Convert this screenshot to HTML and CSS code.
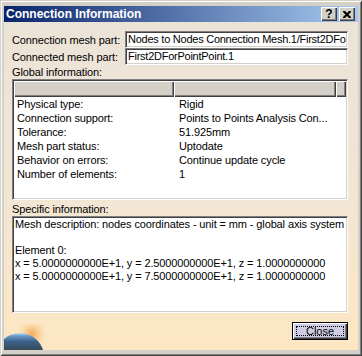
FILE: index.html
```html
<!DOCTYPE html>
<html lang="en">
<head>
    <meta charset="UTF-8">
    <title>Connection Information</title>
    <link rel="stylesheet" href="styles.css">
</head>
<body>

<div class="window">
    <div class="titlebar">
        <span class="title">Connection Information</span>
        <div class="title-btns">
            <button class="tbtn help-btn">?</button>
            <button class="tbtn">
                <svg width="8" height="7" viewBox="0 0 8 7">
                    <path d="M0 0h2l2 2 2-2h2v1l-2.5 2.5L8 6v1H6L4 5 2 7H0V6l2.5-2.5L0 1z" fill="#000"/>
                </svg>
            </button>
        </div>
    </div>

    <div class="client">
        <!-- globe decoration at the bottom left -->
        <svg class="globe" width="56" height="26" viewBox="0 0 56 26">
            <defs>
                <radialGradient id="glow" cx="0.5" cy="0.5" r="0.5">
                    <stop offset="0" stop-color="#f6a24a" stop-opacity="0.9"/>
                    <stop offset="0.5" stop-color="#f8c078" stop-opacity="0.5"/>
                    <stop offset="1" stop-color="#fde7c2" stop-opacity="0"/>
                </radialGradient>
                <linearGradient id="sphere" x1="0" y1="0" x2="0" y2="1">
                    <stop offset="0" stop-color="#b8dcf4"/>
                    <stop offset="0.06" stop-color="#6a9cc8"/>
                    <stop offset="0.18" stop-color="#3a6088"/>
                    <stop offset="0.38" stop-color="#3a4652"/>
                </linearGradient>
            </defs>
            <circle cx="28" cy="10" r="16" fill="url(#glow)"/>
            <circle cx="16" cy="33" r="24" fill="url(#sphere)"/>
        </svg>

        <div class="field-row">
            <span class="field-label">Connection mesh part:</span>
            <div class="textbox">Nodes to Nodes Connection Mesh.1/First2DFo</div>
        </div>
        <div class="field-row">
            <span class="field-label">Connected mesh part:</span>
            <div class="textbox">First2DForPointPoint.1</div>
        </div>

        <div class="section-label">Global information:</div>
        <div class="listview">
            <div class="lv-header">
                <div class="lv-head c1"></div>
                <div class="lv-head c2"></div>
                <div class="lv-head c3"></div>
            </div>
            <div class="lv-row"><span class="c1">Physical type:</span><span class="c2">Rigid</span></div>
            <div class="lv-row"><span class="c1">Connection support:</span><span class="c2">Points to Points Analysis Con...</span></div>
            <div class="lv-row"><span class="c1">Tolerance:</span><span class="c2">51.925mm</span></div>
            <div class="lv-row"><span class="c1">Mesh part status:</span><span class="c2">Uptodate</span></div>
            <div class="lv-row"><span class="c1">Behavior on errors:</span><span class="c2">Continue update cycle</span></div>
            <div class="lv-row"><span class="c1">Number of elements:</span><span class="c2">1</span></div>
        </div>

        <div class="section-label">Specific information:</div>
        <div class="textarea">
            <div class="ta-line">Mesh description: nodes coordinates - unit = mm - global axis system</div>
            <div class="ta-line"></div>
            <div class="ta-line">Element 0:</div>
            <div class="ta-line">x = 5.0000000000E+1, y = 2.5000000000E+1, z = 1.0000000000</div>
            <div class="ta-line">x = 5.0000000000E+1, y = 7.5000000000E+1, z = 1.0000000000</div>
        </div>

        <div class="footer">
            <button class="close-btn"><span class="focus-rect">Close</span></button>
        </div>
    </div>
</div>

</body>
</html>
```

FILE: styles.css
```css
* {
    box-sizing: border-box;
}

body {
    margin: 0;
    font-family: 'Liberation Sans', Arial, sans-serif;
    font-size: 11px;
    letter-spacing: -0.12px;
    color: #000000;
    background-color: #d4d0c8;
    overflow: hidden;
}

/* Window frame */
.window {
    width: 362px;
    height: 356px;
    padding: 6px 4px 6px 4px;
    background-color: #d4d0c8;
    box-shadow: inset 1px 1px 0 #d4d0c8, inset -1px -1px 0 #404040,
                inset 2px 2px 0 #ffffff, inset -2px -2px 0 #808080;
    display: flex;
    flex-direction: column;
}

.titlebar {
    height: 16px;
    background: linear-gradient(to right, #0a246a, #a6caf0);
    display: flex;
    align-items: center;
    justify-content: space-between;
    padding: 0 3px 0 2px;
}

.title {
    color: #ffffff;
    font-weight: bold;
    font-size: 12px;
    letter-spacing: 0;
}

.title-btns {
    display: flex;
    gap: 2px;
}

.tbtn {
    width: 16px;
    height: 14px;
    padding: 0;
    border: none;
    background-color: #d4d0c8;
    box-shadow: inset 1px 1px 0 #ffffff, inset -1px -1px 0 #404040, inset -2px -2px 0 #808080;
    display: flex;
    align-items: center;
    justify-content: center;
    font-family: 'Liberation Sans', Arial, sans-serif;
}

.help-btn {
    font-weight: bold;
    font-size: 12px;
    line-height: 12px;
    padding-bottom: 1px;
}

/* Client area */
.client {
    flex: 1;
    position: relative;
    background: linear-gradient(to bottom, #ece3d8 0%, #f2e6d4 55%, #fde7c2 100%);
    padding: 9px 10px 10px 8px;
    display: flex;
    flex-direction: column;
}

.globe {
    position: absolute;
    left: 0;
    bottom: 0;
}

.field-row {
    display: flex;
    align-items: center;
    height: 17px;
}

.field-label {
    width: 113px;
    flex-shrink: 0;
}

.textbox {
    flex: 1;
    height: 17px;
    background-color: #ffffff;
    border: 1px solid;
    border-color: #808080 #ffffff #ffffff #808080;
    box-shadow: inset 1px 1px 0 #404040, inset -1px -1px 0 #d4d0c8;
    padding: 0 2px;
    line-height: 15px;
    letter-spacing: -0.25px;
    white-space: nowrap;
    overflow: hidden;
}

.section-label {
    height: 14px;
    line-height: 14px;
}

/* List view */
.listview {
    height: 121px;
    margin-bottom: 2px;
    background-color: #ffffff;
    border: 1px solid;
    border-color: #808080 #ffffff #ffffff #808080;
    box-shadow: inset 1px 1px 0 #404040, inset -1px -1px 0 #d4d0c8;
    padding: 1px;
    overflow: hidden;
}

.lv-header {
    display: flex;
    height: 16px;
}

.lv-head {
    background-color: #d4d0c8;
    box-shadow: inset 1px 1px 0 #ffffff, inset -1px -1px 0 #404040, inset -2px -2px 0 #808080;
}

.c1 {
    width: 160px;
    flex-shrink: 0;
    padding-left: 3px;
}

.c2 {
    width: 162px;
    flex-shrink: 0;
    padding-left: 5px;
}

.c3 {
    flex: 1;
}

.lv-row {
    display: flex;
    height: 14px;
    line-height: 14px;
    white-space: nowrap;
}

/* Specific information */
.textarea {
    height: 97px;
    background-color: #ffffff;
    border: 1px solid;
    border-color: #808080 #ffffff #ffffff #808080;
    box-shadow: inset 1px 1px 0 #404040, inset -1px -1px 0 #d4d0c8;
    padding: 1px 2px;
    overflow: hidden;
}

.ta-line {
    height: 13px;
    line-height: 13px;
    white-space: nowrap;
}

.footer {
    margin-top: 10px;
    display: flex;
    justify-content: flex-end;
}

.close-btn {
    width: 56px;
    height: 18px;
    margin-top: -1px;
    padding: 3px;
    border: 1px solid #000000;
    background-color: #cfcde3;
    box-shadow: inset 1px 1px 0 #ffffff, inset -1px -1px 0 #404040, inset -2px -2px 0 #808080;
    font-family: inherit;
    font-size: 11px;
    letter-spacing: 0;
    display: flex;
}

.focus-rect {
    flex: 1;
    border: 1px dotted #000000;
    display: flex;
    align-items: center;
    justify-content: center;
    line-height: 10px;
}
```
